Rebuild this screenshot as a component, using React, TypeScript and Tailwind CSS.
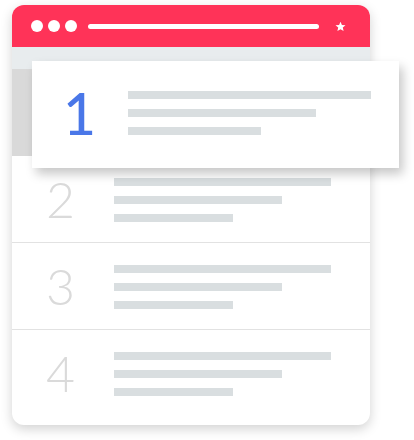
import React from "react";

const Lines = ({ widths }: { widths: number[] }) => (
  <div className="flex flex-col gap-[10px]">
    {widths.map((w, i) => (
      <div key={i} className="h-[8px] bg-[#d9dee0]" style={{ width: w }} />
    ))}
  </div>
);

const Row = ({ n, border = true }: { n: string; border?: boolean }) => (
  <div className={`h-[87px] flex items-start ${border ? "border-b border-[#e2e2e2]" : ""}`}>
    <div className="w-[102px] pl-[34px] pt-[16px] text-[50px] leading-[54px] font-light text-[#dadada]" style={{ fontFamily: "Lato, 'Open Sans', sans-serif" }}>
      {n}
    </div>
    <div className="pt-[22px]">
      <Lines widths={[217, 168, 119]} />
    </div>
  </div>
);

export default function App() {
  return (
    <div className="relative w-[414px] h-[440px] bg-white pt-[5px] pl-[12px]">
      <div className="w-[358px] h-[420px] rounded-[12px] overflow-hidden bg-white shadow-[0_4px_12px_rgba(0,0,0,0.18)]">
        <div className="h-[42px] bg-[#ff3358] flex items-center pl-[19px]">
          <div className="flex gap-[5px]">
            <div className="w-[12px] h-[12px] rounded-full bg-white" />
            <div className="w-[12px] h-[12px] rounded-full bg-white" />
            <div className="w-[12px] h-[12px] rounded-full bg-white" />
          </div>
          <div className="ml-[11px] w-[231px] h-[5px] rounded-full bg-white" />
          <svg className="ml-[16px]" width="11" height="11" viewBox="0 0 24 24">
            <path fill="white" d="M12 1.5l3.1 7.2 7.8.6-5.9 5.1 1.8 7.6L12 18l-6.8 4 1.8-7.6-5.9-5.1 7.8-.6z" />
          </svg>
        </div>
        <div className="h-[22px] bg-[#e8ecee]" />
        <div className="h-[87px] bg-[#d9d9d9]" />
        <Row n="2" />
        <Row n="3" />
        <Row n="4" border={false} />
      </div>
      <div className="absolute left-[32px] top-[61px] w-[367px] h-[107px] bg-white shadow-[4px_6px_10px_rgba(0,0,0,0.22)] flex items-start">
        <div className="w-[96px] pl-[31px] pt-[22px] text-[57px] leading-[60px] font-medium text-[#4a77e8]" style={{ fontFamily: "Lato, 'Open Sans', sans-serif" }}>
          1
        </div>
        <div className="pt-[30px]">
          <Lines widths={[243, 188, 133]} />
        </div>
      </div>
    </div>
  );
}
